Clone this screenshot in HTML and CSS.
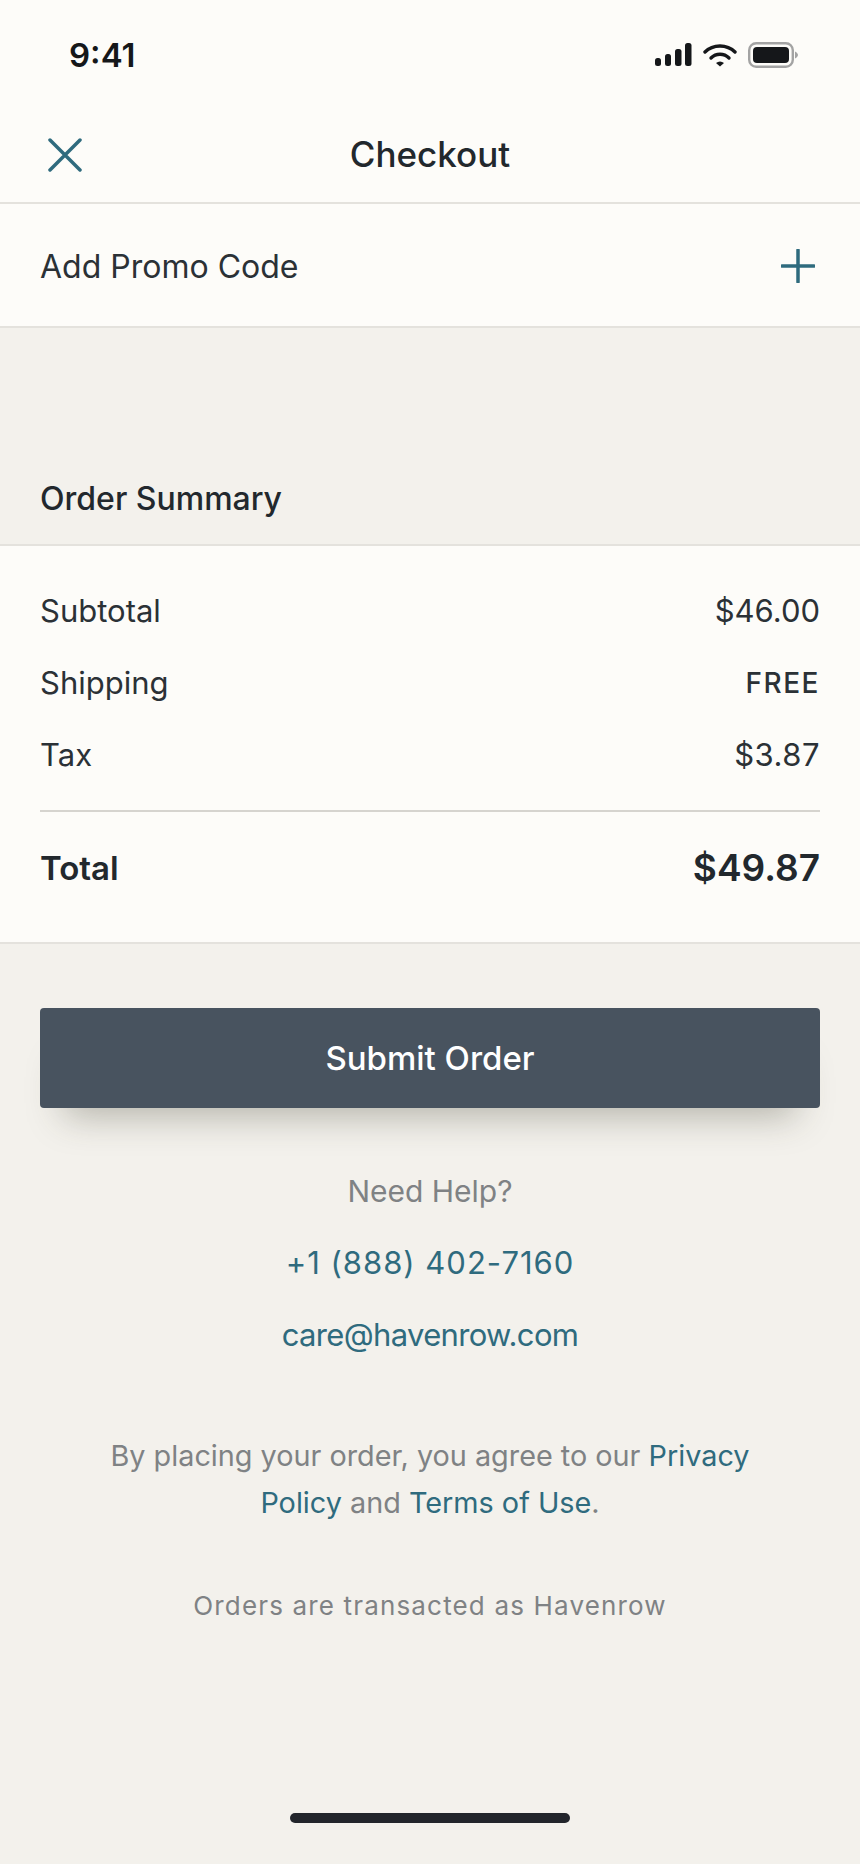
FILE: index.html
```html
<!DOCTYPE html>
<html lang="en">
<head>
  <meta charset="UTF-8">
  <meta name="viewport" content="width=device-width, initial-scale=1.0">
  <title>Checkout</title>
  <link rel="stylesheet" href="styles.css">
</head>
<body>
  <div class="screen">
    <!-- status bar -->
    <div class="status-bar">
      <span class="time">9:41</span>
      <div class="status-icons">
        <svg width="37" height="24" viewBox="0 0 37 24" fill="#15171a">
          <rect x="0" y="15" width="6" height="8" rx="2.5"/>
          <rect x="10" y="11" width="6" height="12" rx="2.5"/>
          <rect x="20" y="6" width="6.5" height="17" rx="2.5"/>
          <rect x="30" y="0" width="6.5" height="23" rx="2.5"/>
        </svg>
        <svg width="34" height="24" viewBox="0 0 34 24" fill="none" stroke="#15171a" stroke-width="3.4" stroke-linecap="round">
          <path d="M2 9 C10 1 24 1 32 9"/>
          <path d="M8 15 C13 10 21 10 26 15"/>
          <path d="M13 20 L17 23.5 L21 20 C18.5 18 15.5 18 13 20 Z" fill="#15171a" stroke="none"/>
        </svg>
        <svg class="battery" width="50" height="26" viewBox="0 0 50 26">
          <rect x="1.2" y="1.2" width="43.6" height="23.6" rx="7" fill="none" stroke="#a3a3a3" stroke-width="2.4"/>
          <rect x="5" y="5" width="36" height="16" rx="4" fill="#15171a"/>
          <path d="M47 9.5 C49 10.5 50 12 50 13 C50 14 49 15.5 47 16.5 Z" fill="#a3a3a3"/>
        </svg>
      </div>
    </div>

    <!-- header -->
    <header class="nav">
      <svg class="nav-close" width="34" height="34" viewBox="0 0 34 34" fill="none" stroke="#2f6b7e" stroke-width="3.5" stroke-linecap="round">
        <path d="M2 2 L32 32 M32 2 L2 32"/>
      </svg>
      <h1 class="nav-title">Checkout</h1>
    </header>

    <div class="promo">
      <span>Add Promo Code</span>
      <svg width="34" height="34" viewBox="0 0 34 34" fill="none" stroke="#2f6b7e" stroke-width="3.5" stroke-linecap="round">
        <path d="M17 1 V33 M1 17 H33"/>
      </svg>
    </div>

    <h2 class="section-title">Order Summary</h2>

    <section class="summary">
      <div class="row"><span>Subtotal</span><span>$46.00</span></div>
      <div class="row"><span>Shipping</span><span class="free">FREE</span></div>
      <div class="row"><span>Tax</span><span class="tax-value">$3.87</span></div>
      <div class="row total"><span>Total</span><span class="total-value">$49.87</span></div>
    </section>

    <div class="actions">
      <button class="submit">Submit Order</button>
      <p class="help">Need Help?</p>
      <a class="link help-link phone">+1 (888) 402-7160</a>
      <a class="link help-link email">care@havenrow.com</a>
      <p class="legal">By placing your order, you agree to our <a class="link">Privacy</a><br><a class="link">Policy</a> and <a class="link">Terms of Use</a>.</p>
      <p class="merchant">Orders are transacted as Havenrow</p>
    </div>

    <div class="home-bar"></div>
  </div>
</body>
</html>
```

FILE: styles.css
```css
* {
  box-sizing: border-box;
}
body {
  margin: 0;
  background: #f3f1ec;
  font-family: Inter, "Liberation Sans", sans-serif;
  color: #2b3136;
}
.screen {
  width: 860px;
  height: 1864px;
  display: flex;
  flex-direction: column;
  background: #f3f1ec;
}
.status-bar {
  height: 96px;
  padding: 13px 62px 0 69px;
  display: flex;
  justify-content: space-between;
  align-items: center;
  background: #fdfcf9;
}
.time {
  font-size: 33px;
  font-weight: 600;
  color: #15171a;
}
.status-icons {
  display: flex;
  align-items: center;
  gap: 11px;
}
.nav {
  height: 108px;
  display: flex;
  align-items: center;
  justify-content: center;
  position: relative;
  background: #fdfcf9;
  border-bottom: 2px solid #e4e2dd;
}
.nav-close {
  position: absolute;
  left: 48px;
  top: 42px;
}
.nav-title {
  margin: 10px 0 0;
  font-size: 35px;
  font-weight: 500;
  color: #22282d;
}
.promo {
  height: 124px;
  padding: 2px 45px 0 40px;
  display: flex;
  justify-content: space-between;
  align-items: center;
  font-size: 32px;
  background: #fdfcf9;
  border-bottom: 2px solid #e4e2dd;
}
.section-title {
  margin: 0;
  padding: 150px 40px 24px;
  font-size: 32px;
  line-height: 42px;
  font-weight: 500;
  color: #22282d;
}
.summary {
  padding: 28px 40px 0;
  height: 400px;
  background: #fdfcf9;
  border-top: 2px solid #e4e2dd;
  border-bottom: 2px solid #e4e2dd;
}
.row {
  height: 72px;
  display: flex;
  justify-content: space-between;
  align-items: center;
  font-size: 31px;
}
.free {
  padding-top: 2px;
  font-size: 28px;
  font-weight: 500;
  letter-spacing: 1.5px;
}
.tax-value {
  letter-spacing: 0.5px;
}
.total {
  height: 113px;
  margin-top: 20px;
  border-top: 2px solid #d6d4cf;
  font-weight: 600;
  font-size: 33px;
  color: #22282d;
}
.total-value {
  font-size: 37px;
}
.actions {
  padding: 64px 40px 0;
  display: flex;
  flex-direction: column;
  align-items: center;
  text-align: center;
  font-size: 31px;
}
.submit {
  width: 100%;
  height: 100px;
  border: none;
  border-radius: 4px;
  background: #48535f;
  color: #fff;
  font-family: inherit;
  font-size: 33px;
  font-weight: 500;
  box-shadow: 0 32px 36px -24px rgba(60, 60, 40, 0.34);
}
.help {
  margin: 62px 0 0;
  font-size: 30px;
  line-height: 42px;
  color: #7f8284;
}
.link {
  color: #2f6b7e;
}
.help-link {
  margin-top: 30px;
  line-height: 42px;
}
.phone {
  letter-spacing: 1px;
}
.email {
  letter-spacing: -0.65px;
}
.legal {
  margin: 76px 0 0;
  line-height: 47px;
  font-size: 28.8px;
  color: #7f8284;
}
.merchant {
  margin: 60px 0 0;
  font-size: 26px;
  letter-spacing: 1.16px;
  line-height: 40px;
  color: #7f8284;
}
.home-bar {
  width: 280px;
  height: 10px;
  border-radius: 5px;
  background: #22252b;
  margin: auto auto 41px;
}
```
